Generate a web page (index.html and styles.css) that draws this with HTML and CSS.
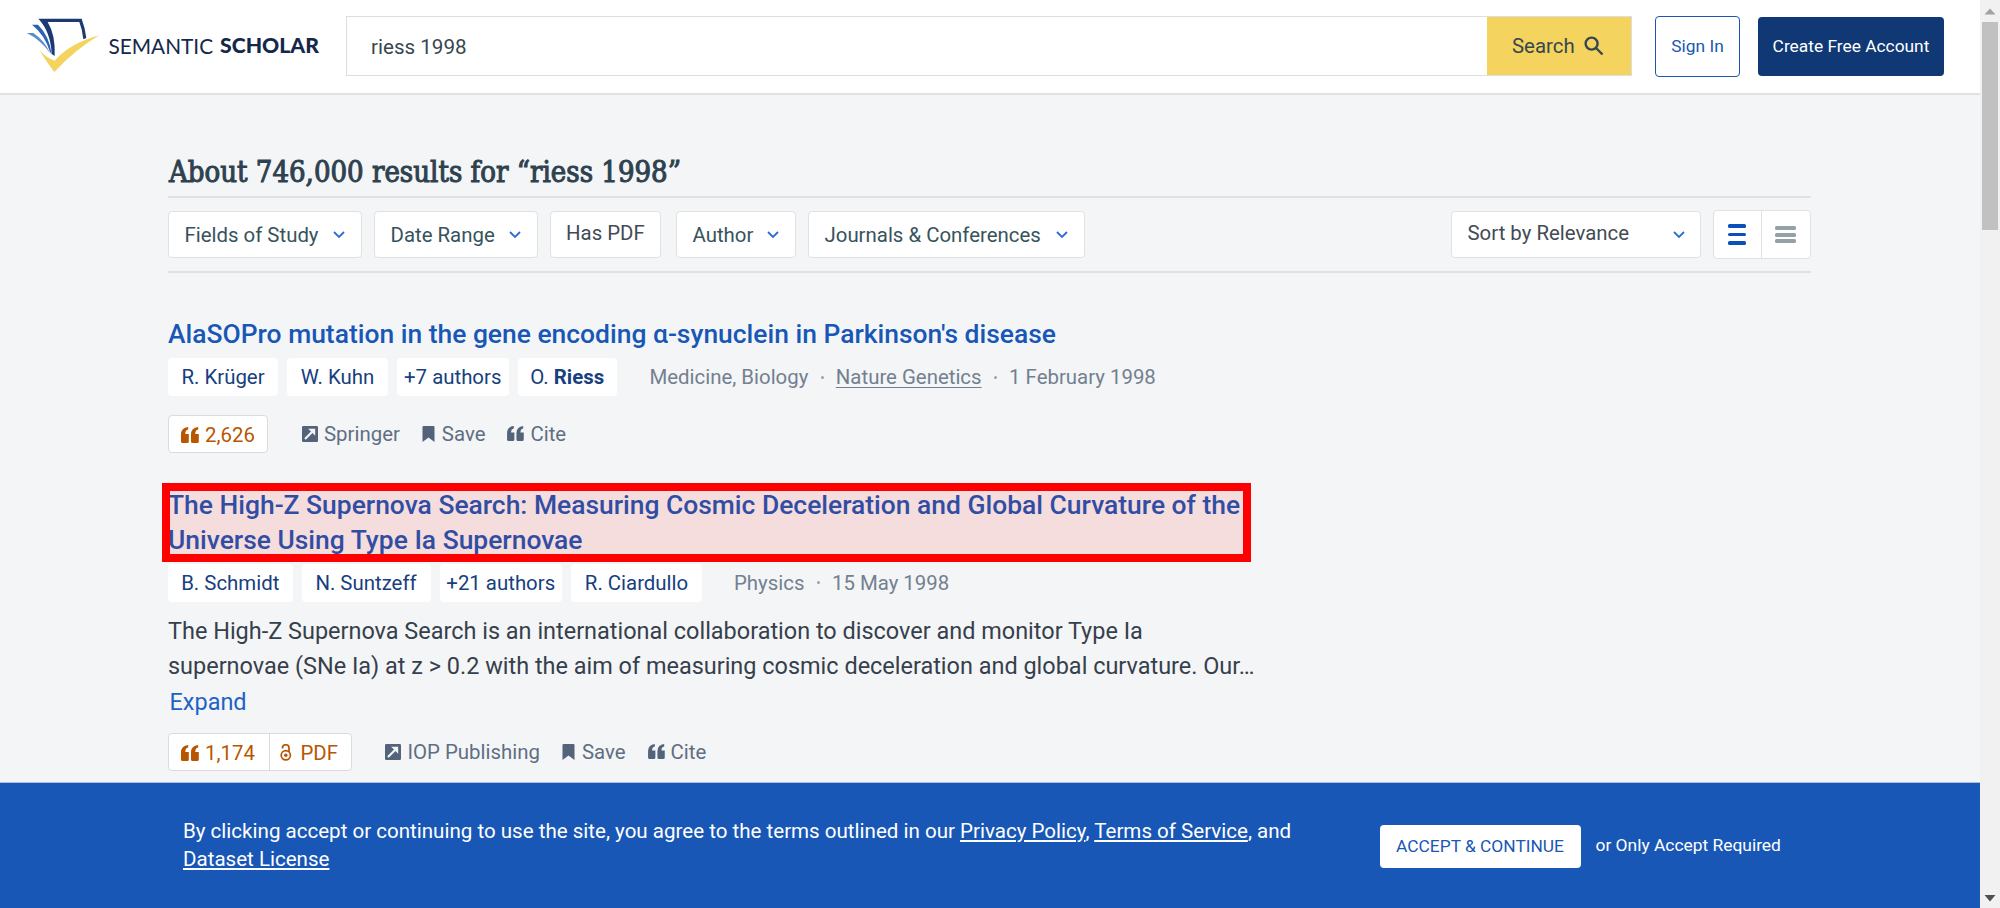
FILE: index.html
```
<!DOCTYPE html>
<html lang="en">
<head>
<meta charset="utf-8">
<title>riess 1998 | Semantic Scholar</title>
<link rel="stylesheet" href="styles.css">
</head>
<body>
<svg class="defs" aria-hidden="true">
  <symbol id="chevron" viewBox="0 0 12 8"><path d="M1 1l5 5 5-5" fill="none" stroke="currentColor" stroke-width="1.8"/></symbol>
  <symbol id="quote" viewBox="0 0 18 16"><path d="M7.2 0v2.6C5 3 4.3 4.4 4.3 7h3.5v7.4Q7.8 16 6.2 16H1.600Q0 16 0 14.400V7.500Q0 .8 7.200 0zM17.200 0v2.600C15 3 14.300 4.400 14.300 7h3.500v7.400Q17.800 16 16.200 16H11.600Q10 16 10 14.400V7.500Q10 .8 17.200 0z" fill="currentColor"/></symbol>
  <symbol id="external" viewBox="0 0 16 16"><rect width="16" height="16" rx="1.300" fill="currentColor"/><path d="M3 13L10.500 5.500" stroke="#f4f5f7" stroke-width="2.200" fill="none"/><path d="M6.200 2.800H13.200V9.800z" fill="#f4f5f7"/></symbol>
  <symbol id="bookmark" viewBox="0 0 12 16"><path d="M0 1q0-1 1-1h10q1 0 1 1v15l-6-4.500L0 16z" fill="currentColor"/></symbol>
  <symbol id="open-access" viewBox="0 0 12 17"><g fill="none" stroke="currentColor" stroke-width="1.700"><circle cx="5.800" cy="11.300" r="4.600"/><path d="M2.500 4.500V4a3.200 3.200 0 0 1 6.500 0v4"/></g><circle cx="5.800" cy="11.300" r="1.700" fill="currentColor"/></symbol>
</svg>

<div class="window">
  <div class="page">
    <header class="header">
      <a class="logo">
        <svg class="logo-mark" viewBox="0 0 240 190">
          <path fill="#f4d35e" d="M59 121Q80 145 104 152Q150 100 238 76Q170 115 103 186Q75 150 59 121Z"/>
          <path fill="#5b8bd0" d="M20 69H40Q74 92 90 129Q60 88 20 69Z"/>
          <path fill="#2e5fb3" d="M36 44H54Q88 78 95 132L90 126Q75 75 36 44Z"/>
          <path fill="#1b3a73" d="M55 26H185Q195 52 199 84L190 88Q187 58 178 36H83Q107 75 104 138L95 132Q92 65 55 26Z"/>
        </svg>
        <span class="logo-text"><span class="logo-light">SEMANTIC</span><span class="logo-bold">SCHOLAR</span></span>
      </a>
      <form class="search">
        <div class="search-input">riess 1998</div>
        <div class="search-button"><span>Search</span>
          <svg width="20" height="20" viewBox="0 0 20 20"><g fill="none" stroke="currentColor" stroke-width="2.400"><circle cx="7.600" cy="7.600" r="6"/><path d="M12 12l6.500 6.500"/></g></svg>
        </div>
      </form>
      <a class="sign-in">Sign In</a>
      <a class="create">Create Free Account</a>
    </header>

    <main class="content">
      <h1 class="heading">About 746,000 results for “riess 1998”</h1>
      <div class="toolbar">
        <div class="filter fields"><span>Fields of Study</span><svg class="chevron"><use href="#chevron"/></svg></div>
        <div class="filter date"><span>Date Range</span><svg class="chevron"><use href="#chevron"/></svg></div>
        <div class="filter has-pdf"><span>Has PDF</span></div>
        <div class="filter author"><span>Author</span><svg class="chevron"><use href="#chevron"/></svg></div>
        <div class="filter journals"><span>Journals &amp; Conferences</span><svg class="chevron"><use href="#chevron"/></svg></div>
        <div class="filter sort"><span>Sort by Relevance</span><svg class="chevron"><use href="#chevron"/></svg></div>
        <div class="views">
          <div class="view detailed"><i></i><i></i><i></i></div>
          <div class="view compact"><i></i><i></i><i></i></div>
        </div>
      </div>

      <article class="result first">
        <h2 class="title">AlaSOPro mutation in the gene encoding α-synuclein in Parkinson's disease</h2>
        <div class="meta">
          <span class="chip w110">R. Krüger</span><span class="chip w101">W. Kuhn</span><span class="chip w112">+7 authors</span><span class="chip w100">O.&nbsp;<b>Riess</b></span>
          <span class="facts"><span>Medicine, Biology</span><i class="dot"></i><span class="venue">Nature Genetics</span><i class="dot"></i><span>1 February 1998</span></span>
        </div>
        <div class="actions">
          <div class="stats"><span class="stat cited"><svg class="i-quote"><use href="#quote"/></svg>2,626</span></div>
          <span class="action"><svg class="i-external"><use href="#external"/></svg>Springer</span>
          <span class="action"><svg class="i-bookmark"><use href="#bookmark"/></svg>Save</span>
          <span class="action"><svg class="i-cite"><use href="#quote"/></svg>Cite</span>
        </div>
      </article>

      <article class="result second">
        <h2 class="title">The High-Z Supernova Search: Measuring Cosmic Deceleration and Global Curvature of the<br>Universe Using Type Ia Supernovae<span class="highlight"></span></h2>
        <div class="meta">
          <span class="chip w125">B. Schmidt</span><span class="chip w129">N. Suntzeff</span><span class="chip w123">+21 authors</span><span class="chip w131">R. Ciardullo</span>
          <span class="facts"><span>Physics</span><i class="dot"></i><span>15 May 1998</span></span>
        </div>
        <p class="abstract">The High-Z Supernova Search is an international collaboration to discover and monitor Type Ia<br>supernovae (SNe Ia) at z &gt; 0.2 with the aim of measuring cosmic deceleration and global curvature. Our…<br><a class="expand">Expand</a></p>
        <div class="actions">
          <div class="stats"><span class="stat cited"><svg class="i-quote"><use href="#quote"/></svg>1,174</span><span class="stat pdf"><svg class="i-open"><use href="#open-access"/></svg>PDF</span></div>
          <span class="action"><svg class="i-external"><use href="#external"/></svg>IOP Publishing</span>
          <span class="action"><svg class="i-bookmark"><use href="#bookmark"/></svg>Save</span>
          <span class="action"><svg class="i-cite"><use href="#quote"/></svg>Cite</span>
        </div>
      </article>
    </main>

    <footer class="banner">
      <p class="terms">By clicking accept or continuing to use the site, you agree to the terms outlined in our <a>Privacy Policy</a>, <a>Terms of Service</a>, and<br><a>Dataset License</a></p>
      <a class="accept">ACCEPT &amp; CONTINUE</a>
      <span class="required">or Only Accept Required</span>
    </footer>
  </div>
  <div class="scrollbar">
    <svg width="20" height="22" viewBox="0 0 20 22"><path d="M4.500 14.500L10 8.500L15.500 14.500z" fill="#a3a3a3"/></svg>
    <div class="thumb"></div>
    <svg class="down" width="20" height="22" viewBox="0 0 20 22"><path d="M4.500 9L10 15.500L15.500 9z" fill="#505050"/></svg>
  </div>
</div>
</body>
</html>
```
FILE: styles.css
```
* { box-sizing: border-box; }
body { margin: 0; font-family: Roboto, "Liberation Sans", sans-serif; font-size: 20.4px; background: #f4f5f7; }
h1, h2, p { margin: 0; }
.defs { display: none; }
svg { flex: none; display: block; }
.window { display: flex; width: 2000px; height: 908px; overflow: hidden; }
.page { display: flex; flex-direction: column; width: 1980px; height: 908px; }

.header { display: flex; align-items: flex-start; height: 95px; padding: 16px 36px 0 20px; background: #fff; border-bottom: 2px solid #dfe1e2; }
.logo { display: flex; width: 326px; margin-top: -6px; }
.logo-mark { width: 80px; height: 63.300px; }
.logo-text { display: flex; gap: 7px; margin-left: 8.500px; font: 20.800px/25px Lato, sans-serif; color: #14284b; padding-top: 23px; }
.logo-bold { font-weight: 900; font-size: 21.200px; }
.search { display: flex; width: 1286px; height: 60px; border: 1.500px solid #dcdedf; }
.search-input { flex: 1; padding-left: 24px; line-height: 60px; color: #37474f; font-size: 20.600px; }
.search-button { display: flex; align-items: center; width: 144px; padding: 0 0 1px 25px; gap: 9px; background: #f4d35e; color: #37474f; }
.sign-in, .create { display: flex; align-items: center; justify-content: center; font-size: 17.350px; border-radius: 4px; }
.sign-in { width: 85px; height: 61px; margin-left: 23px; padding-bottom: 1px; color: #1857b6; border: 1.500px solid #1857b6; }
.create { width: 186px; height: 59px; margin: 1px 0 0 18px; padding-bottom: 1px; background: #0f3875; color: #fff; }

.content { flex: 1; min-height: 0; overflow: hidden; width: 1653px; margin-left: 158px; padding-left: 10px; }
.heading { height: 101px; padding: 58px 0 0 1px; font: 400 29px/39px "DejaVu Serif Condensed", "DejaVu Serif", serif; font-stretch: condensed; color: #2e414f; -webkit-text-stroke: 1px #2e414f; white-space: nowrap; }
.toolbar { display: flex; align-items: center; height: 77px; border-top: 2px solid #dfe1e3; border-bottom: 2px solid #dfe1e3; }
.filter { display: flex; align-items: center; justify-content: space-between; height: 47px; padding: 0 16px 0 15.500px; background: #fff; border: 1.500px solid #dfe1e3; border-radius: 4px; color: #37535c; white-space: nowrap; }
.chevron { width: 12px; height: 8px; color: #2e6bd6; }
.fields { width: 194px; margin-right: 12px; }
.date { width: 164px; margin-right: 12px; }
.has-pdf { width: 111px; margin-right: 15px; padding-left: 15px; color: #434a54; }
.has-pdf span, .sort span { padding-bottom: 3px; }
.author { width: 120px; margin-right: 12px; }
.journals { width: 277px; }
.sort { width: 250px; margin-left: auto; margin-right: 12px; padding-right: 15px; color: #434a54; }
.views { display: flex; width: 98px; height: 49px; background: #fff; border: 1.500px solid #dfe1e3; border-radius: 4px; }
.view { flex: 1; display: flex; flex-direction: column; align-items: center; justify-content: center; }
.view i { height: 3.500px; border-radius: 1.500px; }
.detailed { gap: 5px; border-right: 1.500px solid #dfe1e3; padding-right: 1px; }
.detailed i { width: 18px; background: #0b4fba; }
.compact { gap: 2.500px; padding-right: 2px; }
.compact i { width: 21px; height: 4px; background: #94a2a8; }

.title { position: relative; font-size: 26.430px; font-weight: 500; line-height: 35px; color: #1857b6; white-space: nowrap; }
.first { padding-top: 42.500px; height: 196px; }
.meta { display: flex; gap: 9px; height: 38px; margin-top: 7.500px; line-height: 38px; white-space: nowrap; }
.chip { display: flex; justify-content: center; background: #fff; border-radius: 4px; color: #16407e; }
.chip b { font-weight: 700; }
.w110 { width: 110px; } .w101 { width: 101px; } .w112 { width: 111.500px; } .w100 { width: 99.500px; }
.w125 { width: 124.500px; } .w129 { width: 129px; } .w123 { width: 122.500px; } .w131 { width: 131px; }
.facts { display: flex; align-items: center; margin-left: 23.500px; color: #72808f; }
.dot { width: 3px; height: 3px; border-radius: 50%; background: #98a3ae; margin: 0 12px 0 12.500px; }
.venue { text-decoration: underline; text-underline-offset: 3px; text-decoration-thickness: 1.300px; }
.actions { display: flex; align-items: center; height: 38px; margin-top: 19px; color: #5f6e82; white-space: nowrap; }
.stats { display: flex; height: 38px; margin-right: 12.500px; background: #fff; border: 1.500px solid #d9dbdd; border-radius: 4px; color: #b85600; }
.stat { display: flex; align-items: center; padding: 1px 0 0 12px; }
.cited { width: 98px; }
.second .cited { width: 99.500px; }
.stat + .stat { border-left: 1.500px solid #d9dbdd; }
.pdf { width: 82px; padding-left: 10px; }
.i-quote { width: 18px; height: 16px; margin-right: 6px; }
.i-open { width: 12px; height: 17px; margin-right: 9px; }
.action { display: flex; align-items: center; margin-left: 21px; padding-bottom: 1px; }
.action + .action { margin-left: 22px; }
.i-external { width: 16px; height: 16px; margin-right: 6.500px; color: #53637a; }
.i-bookmark { width: 13px; height: 16px; margin-right: 7px; color: #53637a; }
.i-cite { width: 17px; height: 15px; margin-right: 6px; color: #53637a; }
.highlight { position: absolute; left: -6px; top: -4px; width: 1089px; height: 79.500px; border: 8.500px solid #f00; background: rgba(255, 0, 0, .1); }

.second { padding-top: 17.500px; }
.second .meta { margin-top: 7px; }
.second .facts { margin-left: 23px; }
.abstract { margin-top: 12px; font-size: 23.460px; line-height: 35.500px; color: #363f4c; white-space: nowrap; }
.expand { color: #1f62c6; padding-left: 1.500px; }
.second .actions { margin-top: 13px; }

.banner { display: flex; height: 126.500px; flex: none; background: #1857b6; color: #fff; border-top: 1px solid #a9bfdf; white-space: nowrap; }
.terms { width: 1379.500px; padding: 34px 0 0 183px; font-size: 20.550px; line-height: 28px; flex: none; }
.terms a { text-decoration: underline; text-underline-offset: 2px; text-decoration-thickness: 1.500px; }
.accept { display: flex; align-items: center; justify-content: center; width: 201px; height: 42.500px; margin-top: 42.500px; padding-bottom: 1px; background: #fff; color: #1857b6; border-radius: 4px; font-size: 17.350px; }
.required { margin: 41.500px 0 0 15px; font-size: 17.400px; line-height: 42.500px; }

.scrollbar { display: flex; flex-direction: column; width: 20px; background: #f1f1f1; }
.thumb { width: 16px; height: 208px; margin-left: 2px; background: #c1c1c1; }
.down { margin-top: auto; }
```
